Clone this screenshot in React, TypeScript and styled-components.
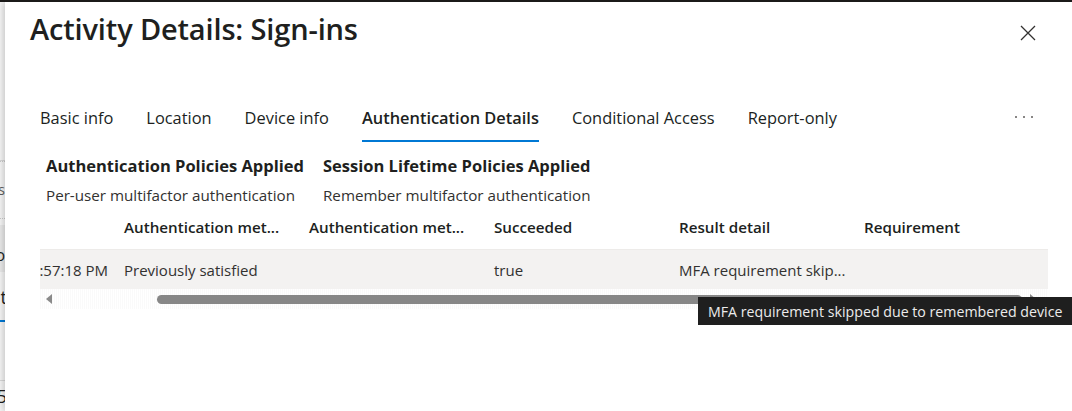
import React from "react";
import styled, { createGlobalStyle } from "styled-components";

const GlobalStyle = createGlobalStyle`
  html, body {
    margin: 0;
    padding: 0;
    background: #ffffff;
  }
  body {
    font-family: "Segoe UI", "Open Sans", "Noto Sans", sans-serif;
    color: #201f1e;
  }
`;

const tabs = [
  "Basic info",
  "Location",
  "Device info",
  "Authentication Details",
  "Conditional Access",
  "Report-only",
];

const columns = [
  "Date",
  "Authentication met...",
  "Authentication met...",
  "Succeeded",
  "Result detail",
  "Requirement",
];

const row = ["3/8/2024, 10:57:18 PM", "Previously satisfied", "", "true", "MFA requirement skip...", ""];

export default function App() {
  return (
    <>
      <GlobalStyle />
      <Frame>
        <BackPage>
          <BackLine />
          <BackFocus>s</BackFocus>
          <BackHover>o</BackHover>
          <BackText gap={10}>t</BackText>
          <BackSelected />
          <BackLine style={{ marginTop: 58 }} />
          <BackText gap={0}>5</BackText>
        </BackPage>
        <Panel>
          <Header>
            <Title>Activity Details: Sign-ins</Title>
            <CloseButton aria-label="Close">
              <svg width="16" height="16" viewBox="0 0 16 16">
                <path d="M1 1 L15 15 M15 1 L1 15" stroke="#323130" strokeWidth="1.3" fill="none" />
              </svg>
            </CloseButton>
          </Header>
          <TabBar>
            {tabs.map((t) => (
              <Tab key={t} active={t === "Authentication Details"}>
                {t}
              </Tab>
            ))}
            <More>
              <Dot />
              <Dot />
              <Dot />
            </More>
          </TabBar>
          <Policies>
            <Policy>
              <PolicyTitle>Authentication Policies Applied</PolicyTitle>
              <PolicyText>Per-user multifactor authentication</PolicyText>
            </Policy>
            <Policy>
              <PolicyTitle>Session Lifetime Policies Applied</PolicyTitle>
              <PolicyText>Remember multifactor authentication</PolicyText>
            </Policy>
          </Policies>
          <TableViewport>
            <TableInner>
              <HeaderRow>
                {columns.map((c, i) => (
                  <HeadCell key={i}>{i === 0 ? "" : c}</HeadCell>
                ))}
              </HeaderRow>
              <DataRow>
                {row.map((c, i) => (
                  <Cell key={i} first={i === 0}>
                    {c}
                  </Cell>
                ))}
              </DataRow>
            </TableInner>
            <ScrollBar>
              <ArrowLeft />
              <Thumb />
              <ArrowRight />
            </ScrollBar>
          </TableViewport>
        </Panel>
        <Tooltip>MFA requirement skipped due to remembered device</Tooltip>
      </Frame>
    </>
  );
}

const Frame = styled.div`
  position: relative;
  width: 1072px;
  height: 411px;
  display: flex;
  border-top: 2px solid #1b1a19;
  box-sizing: border-box;
  overflow: hidden;
`;

const BackPage = styled.div`
  width: 5px;
  flex-shrink: 0;
  background: #f4f4f4;
  display: flex;
  flex-direction: column;
  padding-top: 158px;
  overflow: hidden;
`;

const BackLine = styled.div`
  height: 1px;
  background: #d6d6d6;
`;

const BackFocus = styled.div`
  height: 56px;
  display: flex;
  align-items: center;
  justify-content: flex-end;
  font-size: 14px;
  color: #605e5c;
  border-top: 1px dotted #c8c8c8;
  border-bottom: 1px dotted #c8c8c8;
`;

const BackHover = styled.div`
  height: 48px;
  margin-top: 6px;
  background: #e8e8e8;
  display: flex;
  align-items: center;
  justify-content: flex-end;
  font-size: 16px;
  color: #201f1e;
  line-height: 1;
  padding-top: 12px;
  box-sizing: border-box;
`;

const BackText = styled.div<{ gap: number }>`
  height: 30px;
  margin-top: ${(p) => p.gap}px;
  display: flex;
  align-items: center;
  justify-content: flex-end;
  font-size: 18px;
  line-height: 1;
  color: #201f1e;
  margin-right: -2px;
`;

const BackSelected = styled.div`
  height: 2px;
  margin-top: 8px;
  background: #0078d4;
`;

const Panel = styled.div`
  flex: 1;
  background: #ffffff;
  box-shadow: -2px 0 6px rgba(0, 0, 0, 0.18);
  position: relative;
  z-index: 1;
  display: flex;
  flex-direction: column;
  padding: 0 0 0 25px;
  min-width: 0;
`;

const Header = styled.div`
  display: flex;
  align-items: flex-start;
  justify-content: space-between;
  height: 60px;
  padding-right: 36px;
  box-sizing: border-box;
  padding-top: 7px;
`;

const Title = styled.h1`
  margin: 0;
  font-size: 29px;
  font-weight: 600;
  color: #201f1e;
  letter-spacing: -0.15px;
`;

const CloseButton = styled.button`
  border: none;
  background: transparent;
  padding: 0;
  width: 16px;
  height: 16px;
  display: flex;
  margin-top: 16px;
`;

const TabBar = styled.div`
  display: flex;
  align-items: stretch;
  margin-top: 37px;
  margin-left: 10px;
  padding-right: 39px;
  height: 42px;
  gap: 33px;
`;

const Tab = styled.div<{ active?: boolean }>`
  display: flex;
  align-items: center;
  font-size: 16.4px;
  font-weight: ${(p) => (p.active ? 600 : 400)};
  color: #201f1e;
  border-bottom: 2px solid ${(p) => (p.active ? "#0078d4" : "transparent")};
  padding-bottom: 5px;
  margin-bottom: -1px;
  white-space: nowrap;
`;

const More = styled.div`
  margin-left: auto;
  display: flex;
  align-items: center;
  gap: 6px;
  padding-bottom: 6px;
`;

const Dot = styled.span`
  width: 2px;
  height: 2px;
  border-radius: 1px;
  background: #605e5c;
`;

const Policies = styled.div`
  display: grid;
  grid-template-columns: 277px auto;
  margin-top: 13px;
  margin-left: 16px;
`;

const Policy = styled.div`
  display: flex;
  flex-direction: column;
  gap: 8px;
`;

const PolicyTitle = styled.div`
  font-size: 16.5px;
  font-weight: 700;
  color: #201f1e;
  white-space: nowrap;
`;

const PolicyText = styled.div`
  font-size: 15.2px;
  color: #323130;
  white-space: nowrap;
`;

const TableViewport = styled.div`
  margin-left: 10px;
  width: 1008px;
  overflow: hidden;
  margin-top: 3px;
`;

const TableInner = styled.div`
  margin-left: -109px;
  display: flex;
  flex-direction: column;
`;

const HeaderRow = styled.div`
  display: grid;
  grid-template-columns: repeat(6, 185px) 200px;
  height: 42px;
  border-bottom: 1px solid #edebe9;
  padding-bottom: 3px;
  box-sizing: border-box;
`;

const HeadCell = styled.div`
  display: flex;
  align-items: center;
  padding-left: 8px;
  font-size: 15.2px;
  font-weight: 600;
  color: #201f1e;
  white-space: nowrap;
`;

const DataRow = styled.div`
  display: grid;
  grid-template-columns: repeat(6, 185px) 200px;
  height: 39px;
  background: #f3f2f1;
`;

const Cell = styled.div<{ first?: boolean }>`
  display: flex;
  align-items: center;
  justify-content: ${(p) => (p.first ? "flex-end" : "flex-start")};
  padding: ${(p) => (p.first ? "0 8px 0 0" : "0 0 0 8px")};
  font-size: 15px;
  color: #323130;
  white-space: nowrap;
  overflow: hidden;
`;

const ScrollBar = styled.div`
  height: 20px;
  display: flex;
  align-items: center;
  background: repeating-linear-gradient(90deg, #fafafa 0 1px, #ffffff 1px 2px);
  padding: 0 4px;
`;

const ArrowLeft = styled.div`
  width: 0;
  height: 0;
  border-top: 5px solid transparent;
  border-bottom: 5px solid transparent;
  border-right: 6px solid #8a8a8a;
  margin-left: 2px;
`;

const ArrowRight = styled.div`
  width: 0;
  height: 0;
  border-top: 5px solid transparent;
  border-bottom: 5px solid transparent;
  border-left: 6px solid #8a8a8a;
  margin-left: auto;
  margin-right: 8px;
`;

const Thumb = styled.div`
  height: 9px;
  border-radius: 5px;
  background: #878787;
  margin-left: 105px;
  width: 865px;
`;

const Tooltip = styled.div`
  position: absolute;
  left: 698px;
  top: 295px;
  z-index: 5;
  background: #1f1f1f;
  color: #ececec;
  font-size: 14.2px;
  height: 28px;
  display: flex;
  align-items: center;
  padding: 0 10px;
  white-space: nowrap;
`;
